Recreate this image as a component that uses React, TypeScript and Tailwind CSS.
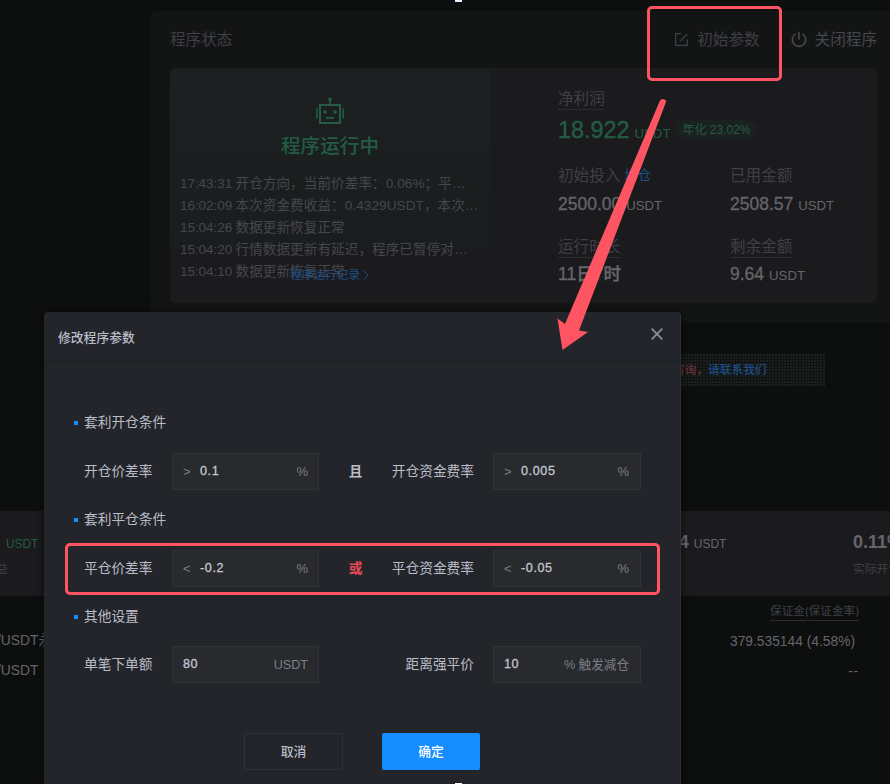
import React from "react";

const SANS = "font-['Liberation_Sans','Noto_Sans_CJK_SC',sans-serif]";

function EditIcon() {
  return (
    <svg width="13" height="13" viewBox="0 0 13 13" fill="none" stroke="#3f3f48" strokeWidth="1.2">
      <path d="M6.2.7H.7v11.6h11.6V6.6" />
      <path d="M5.400 8 12.300.8" />
    </svg>
  );
}

function PowerIcon() {
  return (
    <svg width="16" height="17" viewBox="0 0 16 17" fill="none" stroke="#46464e" strokeWidth="1.6">
      <path d="M4.600 2.900a6.700 6.700 0 1 0 6.800 0" />
      <path d="M8 .8v7.600" />
    </svg>
  );
}

function RobotIcon() {
  return (
    <svg width="28" height="28" viewBox="0 0 28 28" fill="none" stroke="#235c43" strokeWidth="2">
      <rect x="4" y="8" width="20" height="18" />
      <path d="M14 8V3M.9 11.500v10M27.100 11.500v10" strokeWidth="1.6" />
      <circle cx="14" cy="2.500" r="1.900" fill="#235c43" stroke="none" />
      <circle cx="9" cy="15" r="1.800" fill="#235c43" stroke="none" />
      <circle cx="19" cy="15" r="1.800" fill="#235c43" stroke="none" />
      <path d="M10 20.800h8" />
    </svg>
  );
}

const logs = [
  ["17:43:31", "开仓方向，当前价差率：0.06%；平…"],
  ["16:02:09", "本次资金费收益：0.4329USDT，本次…"],
  ["15:04:26", "数据更新恢复正常"],
  ["15:04:20", "行情数据更新有延迟，程序已暂停对…"],
  ["15:04:10", "数据更新恢复正常"],
];

function Stat({ label, value, unit, underline, extra }: { label: string; value: string; unit?: string; underline?: boolean; extra?: string }) {
  return (
    <div className="h-[71px] w-[172px]">
      <div className="flex h-[24px] items-center text-[15.6px] leading-[24px] text-[#3f3f48]">
        <span className={underline ? "border-b border-[#2c2c31] leading-[20px]" : ""}>{label}</span>
        {extra && <span className="ml-[4px] text-[13.4px] text-[#1c4f87]">{extra}</span>}
      </div>
      <div className={(underline ? "mt-[3px]" : "mt-[4px]") + " flex h-[24px] items-baseline text-[17.5px] font-medium leading-[24px] text-[#65656c] [-webkit-text-stroke:0.3px]"}>
        {value}
        {unit && <span className="ml-[5px] text-[13.2px] font-normal [-webkit-text-stroke:0px]">{unit}</span>}
      </div>
    </div>
  );
}

function StatusCard() {
  return (
    <section className="ml-[151px] mt-[11px] h-[312px] rounded-tl-[6px] bg-[#131514] pl-[19px]">
      <header className="flex h-[57px] items-center pr-[13px] text-[15.6px] leading-[24px] text-[#3f3f48]">
        <span>程序状态</span>
        <span className="ml-auto flex items-center gap-[9px]"><EditIcon />初始参数</span>
        <span className="ml-[31px] flex items-center gap-[8px] text-[#46464e]"><PowerIcon />关闭程序</span>
      </header>
      <div className="flex h-[235px] w-[707px] rounded-[6px] bg-[#1b1b1d]">
        <div className="relative h-[182px] w-[320px] shrink-0 rounded-tl-[6px] bg-linear-to-b from-[#1d2021] to-[#1a1d1d]">
          <div className="flex flex-col items-center pt-[29px]">
            <RobotIcon />
            <div className="mt-[7px] text-[19.6px] font-medium leading-[28px] text-[#235c43]">程序运行中</div>
          </div>
          <div className="mt-[13px] pl-[10px] text-[13.6px] leading-[22.1px] text-[#46464e]">
            {logs.map(([time, text]) => (
              <div key={time} className="flex whitespace-nowrap">
                <span className="w-[55.5px] tracking-[-0.1px]">{time}</span>
                <span className="tracking-[0.06px]">{text}</span>
              </div>
            ))}
          </div>
          <div className="absolute left-[120px] top-[198px] flex items-center text-[11.7px] leading-[18px] text-[#1c4f87]">
            程序运行记录
            <svg className="ml-[3px]" width="6" height="10" viewBox="0 0 6 10" fill="none" stroke="#1c4f87"><path d="M.7.7 5 5 .7 9.300" /></svg>
          </div>
        </div>
        <div className="ml-[68px] pt-[19px]">
          <div className="flex h-[24px] items-center text-[15.6px] leading-[21px] text-[#3f3f48]">
            <span className="border-b border-[#2c2c31]">净利润</span>
          </div>
          <div className="mb-[17px] mt-[3px] flex h-[36px] items-baseline text-[23.4px] leading-[32px] text-[#235c43]">
            <span className="[-webkit-text-stroke:0.4px]">18.922</span>
            <span className="ml-[5px] text-[13.2px]">USDT</span>
            <span className="ml-[6px] h-[20px] -translate-y-[4px] rounded-full bg-[#1b2020] px-[6px] text-[12px] leading-[20px]">年化 23.02%</span>
          </div>
          <div className="-mt-[3px] flex">
            <Stat label="初始投入" value="2500.00" unit="USDT" extra="增仓" />
            <Stat label="已用金额" value="2508.57" unit="USDT" />
          </div>
          <div className="flex">
            <Stat label="运行时长" value="11日7时" underline />
            <Stat label="剩余金额" value="9.64" unit="USDT" underline />
          </div>
        </div>
      </div>
    </section>
  );
}

function Background() {
  return (
    <div className="flex flex-col">
      <StatusCard />
      <div className="ml-[673px] mt-[31px] h-[32px] w-[152px] bg-[#101211] bg-[radial-gradient(circle_at_1px_1px,#222425_0.6px,transparent_1px)] bg-[size:3px_3px] text-[11.7px] font-medium leading-[31px]">
        <span className="text-[#643238]">咨询，</span>
        <span className="text-[#1c4f87]">请联系我们</span>
      </div>
      <div className="mt-[125px] flex h-[85px] justify-between bg-[#1b1b1d]">
        <div className="pt-[21px]">
          <div className="pl-[6px] text-[11.9px] leading-[24px] text-[#235c43]">USDT</div>
          <div className="-ml-[4px] mt-[2px] text-[11.8px] leading-[22px] text-[#3f3f48]">益</div>
        </div>
        <div className="flex pt-[19px] text-[#65656c]">
          <div className="w-[174px] whitespace-nowrap text-[17.5px] font-bold leading-[24px]">4<span className="ml-[5px] text-[12px] font-normal">USDT</span></div>
          <div className="w-[37px] whitespace-nowrap">
            <div className="text-[18px] font-bold leading-[24px]">0.11%</div>
            <div className="mt-[4px] text-[11.8px] leading-[22px] text-[#3f3f48]">实际开仓</div>
          </div>
        </div>
      </div>
      <div className="flex justify-between text-[13.8px] text-[#65656c]">
        <div className="-ml-[3px] pt-[30px] leading-[30px]">
          <div>/USDT永续</div>
          <div>/USDT</div>
        </div>
        <div className="flex flex-col items-end pr-[31px] pt-[5px]">
          <div className="border-b border-[#2c2c31] text-[11.6px] leading-[19px] text-[#3f3f48]">保证金(保证金率)</div>
          <div className="mr-[4px] mt-[6px] leading-[30px]">379.535144 (4.58%)</div>
          <div className="tracking-[0.8px] leading-[30px]">--</div>
        </div>
      </div>
    </div>
  );
}

function Field({ prefix, value, suffix, wide }: { prefix?: string; value: string; suffix: string; wide?: boolean }) {
  return (
    <div className={(wide ? "w-[148px] pr-[11px]" : "w-[147px] pr-[10px]") + " flex h-[37px] shrink-0 items-center border border-[#303136] bg-[#292a2e] pl-[10px] text-[12.6px] text-[#7c7e88]"}>
      {prefix && <span className="mr-[9px] w-[8px] text-[13px]">{prefix}</span>}
      <span className="tracking-[0.6px] text-[#c3c7d3] [-webkit-text-stroke:0.3px]">{value}</span>
      <span className={suffix === "%" ? "ml-auto text-[13px]" : "ml-auto pt-px"}>{suffix}</span>
    </div>
  );
}

function Heading({ children }: { children: React.ReactNode }) {
  return (
    <div className="flex h-[24px] items-center pl-[30px] text-[13.7px] leading-[24px]">
      <span className="mr-[6px] h-[4px] w-[4px] bg-[#168dff]" />
      {children}
    </div>
  );
}

type RowProps = { left: string; a: React.ReactNode; mid?: string; red?: boolean; right: string; b: React.ReactNode };

function Row({ left, a, mid, red, right, b }: RowProps) {
  return (
    <div className="flex h-[37px] items-center pl-[40px] text-[13.7px]">
      <span className="w-[88px] pt-px">{left}</span>
      {a}
      <span className={red ? "w-[73px] pt-px text-center font-bold text-[#e74b57]" : "w-[73px] pt-px text-center font-bold"}>{mid}</span>
      <span className="mr-[19px] flex w-[82px] justify-end whitespace-nowrap pt-px">{right}</span>
      {b}
    </div>
  );
}

function Modal() {
  return (
    <div className="absolute left-[44px] top-[312px] h-[480px] w-[637px] rounded-t-[4px] border-r border-[#2f3035] bg-[#24252a] text-[#b9bdc9] shadow-[0_0_8px_#0008]">
      <header className="flex h-[50px] items-center justify-between border-b border-[#1d1e22] pl-[14px] pr-[17px] text-[12.8px] font-medium">
        <span className="pt-[2px]">修改程序参数</span>
        <svg className="-mt-[5px]" width="12" height="12" viewBox="0 0 12 12" fill="none" stroke="#8e919c" strokeWidth="1.7"><path d="m.7.7 10.600 10.600M11.300.7.7 11.300" /></svg>
      </header>
      <div className="pt-[49px]">
        <Heading>套利开仓条件</Heading>
        <div className="h-[18px]" />
        <Row left="开仓价差率" a={<Field prefix=">" value="0.1" suffix="%" />} mid="且" right="开仓资金费率" b={<Field wide prefix=">" value="0.005" suffix="%" />} />
        <div className="h-[18px]" />
        <Heading>套利平仓条件</Heading>
        <div className="h-[18px]" />
        <Row left="平仓价差率" a={<Field prefix="<" value="-0.2" suffix="%" />} mid="或" red right="平仓资金费率" b={<Field wide prefix="<" value="-0.05" suffix="%" />} />
        <div className="h-[18px]" />
        <Heading>其他设置</Heading>
        <div className="h-[17px]" />
        <Row left="单笔下单额" a={<Field value="80" suffix="USDT" />} right="距离强平价" b={<Field wide value="10" suffix="% 触发减仓" />} />
      </div>
      <footer className="mt-[50px] flex gap-[39px] pl-[200px] text-[12.8px] font-medium">
        <button className="h-[37px] w-[99px] rounded-[2px] border border-[#303136]">取消</button>
        <button className="h-[37px] w-[98px] rounded-[2px] bg-[#168dff] text-white">确定</button>
      </footer>
    </div>
  );
}

export default function App() {
  return (
    <main className={"relative flow-root h-[784px] w-[890px] overflow-hidden bg-[#0d0f0e] " + SANS}>
      <Background />
      <Modal />
      <div className="absolute left-[647px] top-[6px] h-[75px] w-[135px] rounded-[5px] border-3 border-[#ff5562]" />
      <div className="absolute left-[65px] top-[543px] h-[52px] w-[595px] rounded-[5px] border-3 border-[#ff5562]" />
      <svg className="absolute left-0 top-0" width="890" height="784">
        <path d="M660 100.500Q662.500 97.500 666 100.500L666 102 579 330.500 588 332 562.500 350 557.500 318.500 565 324Z" fill="#ff5562" />
      </svg>
      <div className="absolute left-[455px] top-0 h-[2px] w-[7px] bg-[#e4efff]" />
      <div className="absolute left-[455px] top-[783px] h-[1px] w-[7px] bg-white" />
    </main>
  );
}
